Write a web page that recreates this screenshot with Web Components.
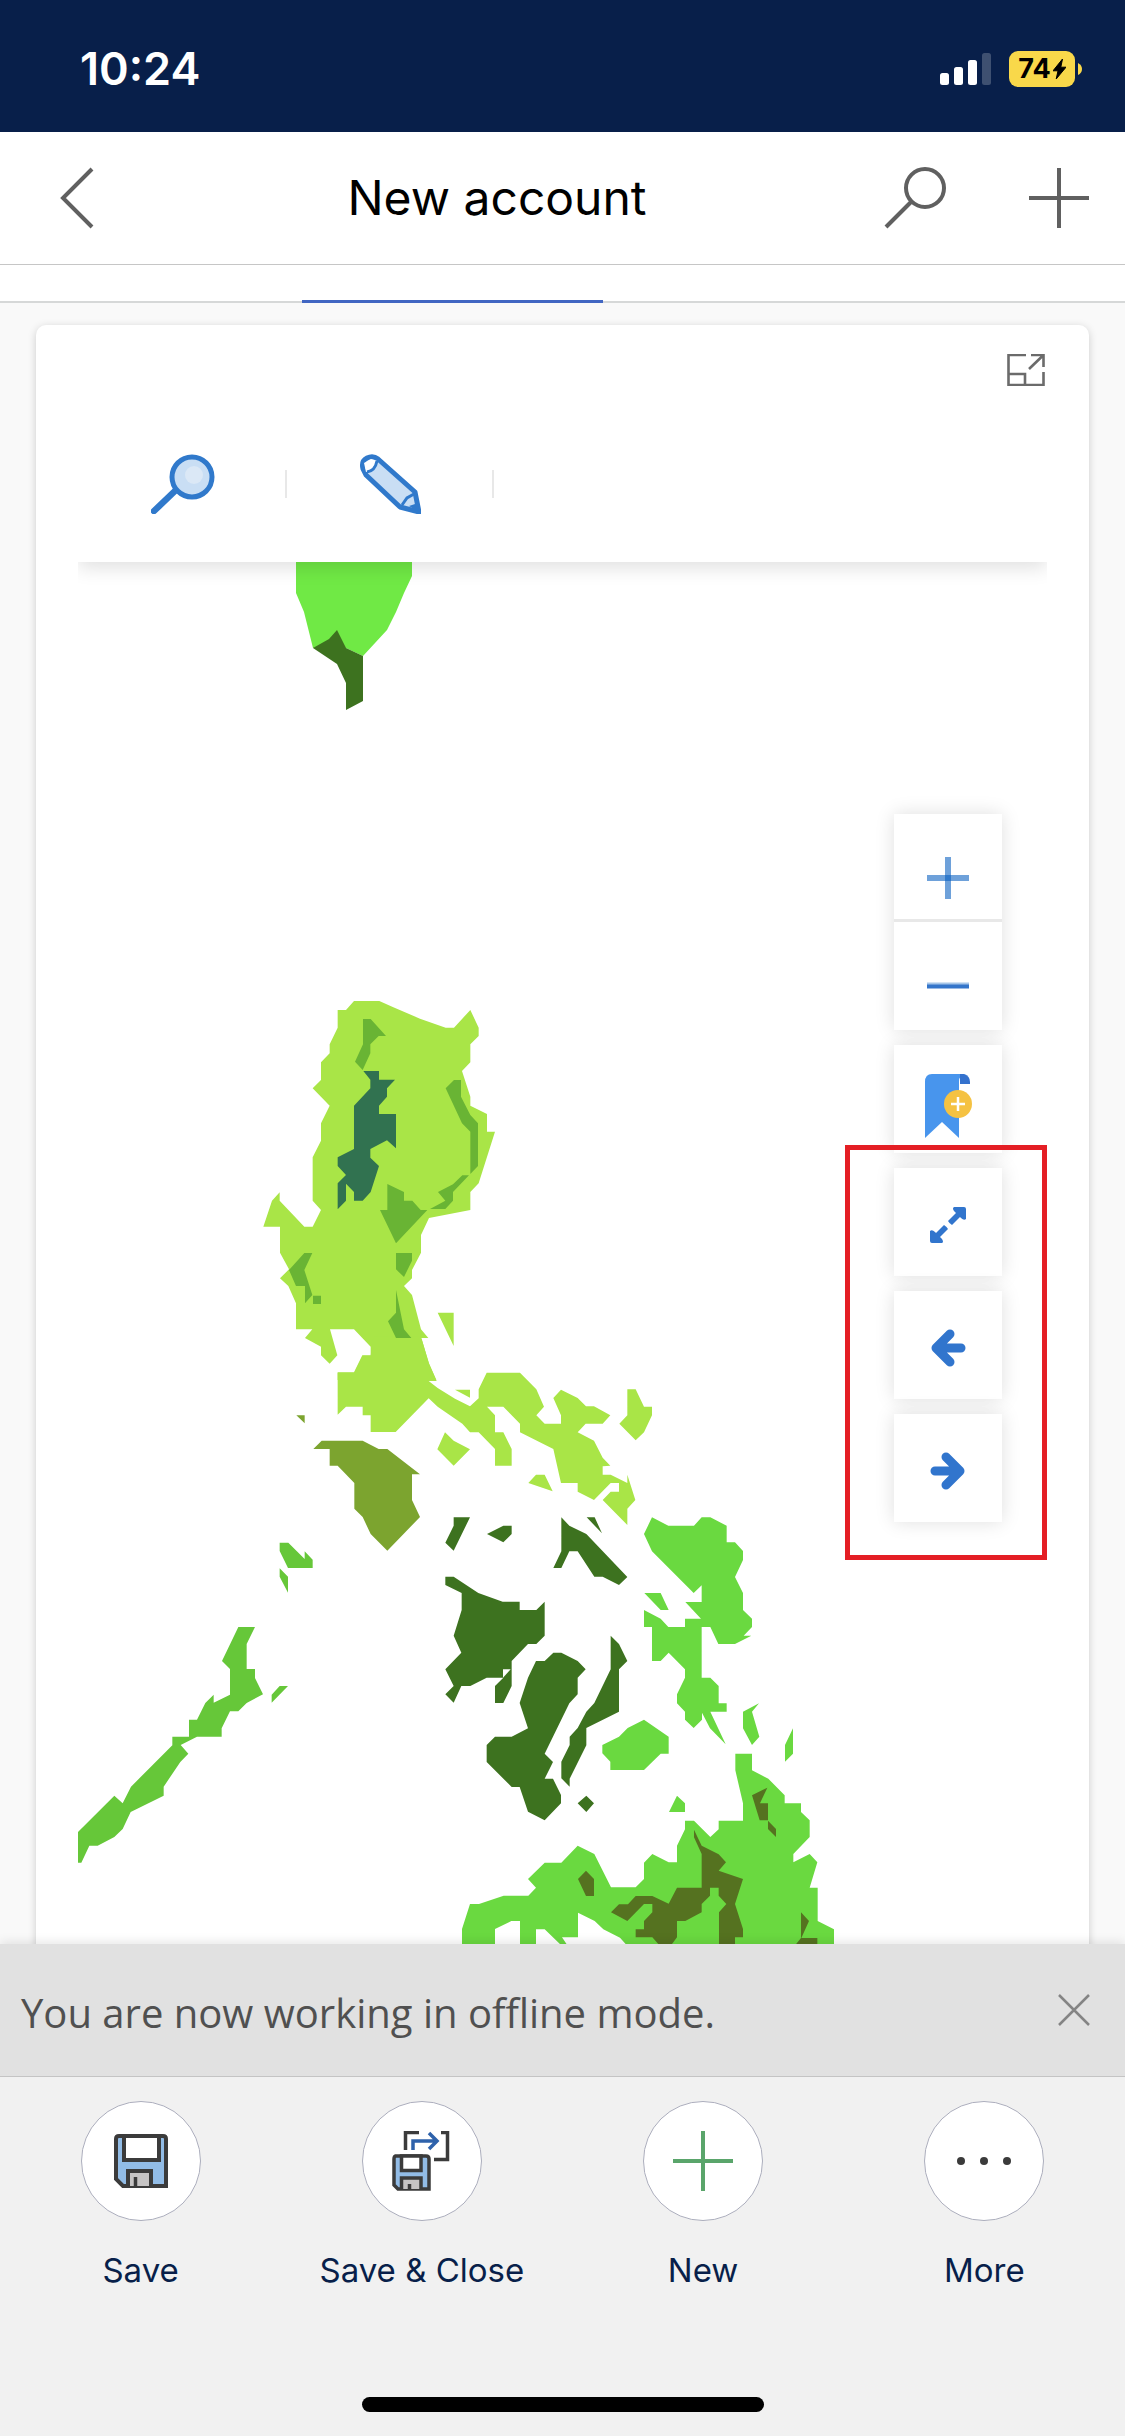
<!DOCTYPE html>
<html lang="en">
<head>
<meta charset="utf-8">
<meta name="viewport" content="width=device-width, initial-scale=1">
<title>New account</title>
<style>
  html, body { margin: 0; height: 100%; }
  body { font-family: Inter, "Liberation Sans", sans-serif; background: #f9f9f9; }
</style>
</head>
<body>
<account-app></account-app>

<script>
const define = (name, html) => {
  const template = document.createElement('template');
  template.innerHTML = html;
  customElements.define(name, class extends HTMLElement {
    constructor() {
      super();
      this.attachShadow({ mode: 'open' }).append(template.content.cloneNode(true));
    }
  });
};

const buttonReset = `
  button { margin: 0; padding: 0; border: 0; background: none; font: inherit; color: inherit; cursor: pointer;
           display: flex; align-items: center; justify-content: center; }
  svg { display: block; flex: none; }`;

define('status-bar', `
  <style>
    :host { display: flex; align-items: center; justify-content: space-between; box-sizing: border-box;
            height: 132px; padding: 6px 43px 0 80px; background: #081f4a; color: #fff; flex: none; }
    time { font-size: 45px; font-weight: 600; line-height: 52px; }
    .right { display: flex; align-items: center; gap: 18px; }
    svg { display: block; }
    .battery { display: flex; align-items: center; gap: 3px; }
    .level { display: flex; align-items: center; justify-content: center; gap: 2px; width: 66px; height: 36px;
             border-radius: 9px; background: #f9d84a; color: #000; font-size: 27px; font-weight: 700; line-height: 36px; }
  </style>
  <time>10:24</time>
  <div class="right">
    <svg width="51" height="32" viewBox="0 0 51 32" aria-hidden="true">
      <g fill="#fff"><rect y="20" width="9" height="12" rx="2.5"/><rect x="14" y="14" width="9" height="18" rx="2.5"/>
      <rect x="28" y="7" width="9" height="25" rx="2.5"/><rect x="42" width="9" height="32" rx="2.5" opacity=".22"/></g>
    </svg>
    <div class="battery">
      <div class="level"><span>74</span>
        <svg width="13" height="20" viewBox="0 0 13 20" aria-hidden="true"><path d="M9.500 0 0 11.800h5L3.200 20 13 8.200H7.800Z" fill="#000" stroke="#000" stroke-linejoin="round"/></svg>
      </div>
      <svg width="4" height="12" viewBox="0 0 4 12" aria-hidden="true"><path d="M0 0Q4 2 4 6T0 12Z" fill="#f9d84a"/></svg>
    </div>
  </div>`);

define('page-header', `
  <style>${buttonReset}
    :host { display: grid; grid-template-columns: 141px 1fr 272px; align-items: center; height: 132px;
            background: #fff; border-bottom: 1px solid #c6c6c6; flex: none; }
    h1 { margin: 0; font-size: 48px; font-weight: 400; line-height: 60px; text-align: center; color: #000; }
    .back { padding-left: 12px; height: 132px; }
    .actions { display: flex; height: 132px; }
    .actions button { width: 124px; }
    .actions button + button { width: 148px; padding-left: 16px; }
    path, circle { fill: none; stroke: #606060; stroke-width: 4; }
  </style>
  <button class="back" aria-label="Back"><svg width="34" height="62" viewBox="0 0 34 62"><path d="M32 2 3 31 32 60"/></svg></button>
  <h1><slot></slot></h1>
  <div class="actions">
    <button aria-label="Search"><svg width="62" height="62" viewBox="0 0 62 62"><circle cx="41" cy="21" r="19"/><path d="M27 35 2 60"/></svg></button>
    <button aria-label="Add"><svg width="60" height="60" viewBox="0 0 60 60"><path d="M30 0v60M0 30h60"/></svg></button>
  </div>`);

define('tab-strip', `
  <style>
    :host { display: grid; grid-template-columns: 302px 301px 1fr; height: 36px; background: #fff;
            border-bottom: 2px solid #d6d8d8; flex: none; }
    span { grid-column: 2; height: 3px; margin-bottom: -2px; align-self: end; background: #4166c2; }
  </style>
  <span></span>`);

define('map-toolbar', `
  <style>${buttonReset}
    :host { display: flex; align-items: center; height: 156px; padding-left: 2px; background: #fff;
            box-shadow: 0 6px 18px rgba(0,0,0,.12); clip-path: inset(0 0 -40px 0); position: relative; z-index: 1; }
    button { width: 207px; height: 28px; border-right: 2px solid #e8e8e8; }
  </style>
  <button aria-label="Search map"><svg width="64" height="60" viewBox="0 0 64 60">
    <path d="M26 35 3 57" stroke="#3079cb" stroke-width="6.500" stroke-linecap="round"/><circle cx="41" cy="23" r="20" fill="#c9def4" stroke="#3079cb" stroke-width="5"/>
    <circle cx="43" cy="21" r="9" fill="#dbe8f6"/></svg></button>
  <button aria-label="Draw on map"><svg width="62" height="60" viewBox="0 0 62 60">
    <path d="M4 15Q2 7 8 4T19 5L56 38 60 58 41 53 7 21Z" fill="#c9def4" stroke="#3079cb" stroke-width="5" stroke-linejoin="round"/>
    <path d="M7 18Q16 18 18 7L12 5 5 9Z" fill="#fff"/><path d="M8 18Q16 17 18 7" fill="none" stroke="#3079cb" stroke-width="3"/><path d="M43 51 48 44 55 40" fill="none" stroke="#3079cb" stroke-width="3"/>
    <path d="M50 52 59 49 60 58Z" fill="#3079cb"/></svg></button>`);

define('region-map', `
  <style>
    :host { display: block; }
    svg { display: block; width: 100%; }
  </style>
  <svg viewBox="78 562 969 1382" role="img" aria-label="Map of regions">
    <path d="M296 562H412V576L404 593 396 612 387 630 363 656 346 648H313L304 612 296 593Z" fill="#70e945"/>
    <path d="M313 648 329 639 337 630 346 648 363 656V701L346 710V683L337 664Z" fill="#3d721f"/>
    <g fill="#a9e547">
      <path transform="translate(250 980) scale(.333333)" d="M263 90 288 90 312 63 388 63 430 82 510 116 587 143 612 143 661 90 686 143 686 168 661 193 661 247 636 273 661 350 661 377 711 402 711 455 735 455 686 610 661 636 661 690 537 714 513 765 513 818 486 870 486 895 462 918 486 945 513 1048 535 1074 514 1074 537 1150 559 1200 263 1200 263 1177 312 1177 337 1126 362 1126 362 1100 312 1048 240 1048 262 1126 239 1151 213 1126 213 1100 165 1074 187 1048 138 1048 138 970 115 918 90 895 117 868 90 818 90 740 40 740 66 662 89 637 89 662 163 740 188 740 213 690 188 662 188 532 213 482 213 430 239 377 188 325 213 300 213 247 239 220 239 193 263 143Z"/>
      <path transform="translate(240 1300) scale(.333333)" d="M293 218 343 218 368 167 392 167 400 110 540 110 545 117 567 192 590 243 566 243 593 264 645 296 690 319 716 295 716 268 740 218 840 218 889 268 912 320 889 346 914 371 963 371 963 346 940 294 963 269 1013 294 1038 319 1062 319 1111 346 1088 371 1037 371 1013 397 1062 422 1088 473 1111 497 1088 499 1088 524 1112 524 1162 549 1162 524 1186 600 1162 626 1162 675 1088 600 1112 575 1137 575 1137 549 1112 549 1062 600 1013 575 1013 549 963 549 940 447 840 397 840 371 790 320 741 320 765 346 765 397 790 397 815 447 815 497 765 497 765 447 716 397 690 397 667 371 593 320 566 295 467 396 392 396 392 346 368 346 368 320 318 320 293 344ZM645 269H690V293ZM593 38H641V138ZM615 397 641 422 690 448 641 497 592 448ZM865 549 888 524 914 524 938 574ZM1162 268 1187 268 1212 320 1236 320 1236 346 1212 397 1187 421 1138 371 1162 346Z"/>
    </g>
    <g transform="translate(250 980) scale(.333333)">
      <path fill="#69b434" d="M339 117H362L408 168H386L361 193V220L338 270 315 245 339 193ZM612 300H633V350L661 405 684 430V558L661 582V455L636 430 587 325ZM637 586H657L609 636V662L586 687H540L586 662 564 636 609 613ZM412 612 462 636V662H487L512 690H532L438 790 390 690H412ZM438 819H486V842L462 891 438 868ZM438 930 462 1048 484 1074H438L414 1024 438 998ZM163 819H187L163 870 187 945 165 970V918H138L117 870ZM189 947H213V972H189Z"/>
      <path fill="#317250" d="M340 273H387V299H435L411 325V350L387 377V402H438V505L411 481 361 507V533L387 558 362 636 338 662H312V636L288 611V662L263 688V610L288 585 263 558V532L312 507V377L361 325V299Z"/>
    </g>
    <path transform="translate(240 1300) scale(.333333)" fill="#7ca42f" d="M220 447 245 422 368 422 416 447 442 447 540 523 516 523 516 600 540 651 442 752 392 702 368 651 343 626 343 549 293 497 269 497 269 447ZM169 346H194V370Z"/>
    <path transform="translate(60 1480) scale(.333333)" fill="#66c739" d="M659 188H685L734 237V214L758 239V264H684L659 213ZM659 265 684 290V338L659 290ZM535 441H585L560 492V567H585V594L609 643 560 669 535 694H510L485 745V770H411L362 795 385 821 361 846 311 920V947L212 996 188 1047 163 1071 113 1097H88L64 1148H54V1056L163 947 188 970 213 920 337 796V770H387V719H411L436 669 461 644V668L510 644V567L486 543ZM635 644 659 618H684L635 668Z"/>
    <g transform="translate(420 1490) scale(.333333)">
      <path fill="#3d721f" d="M101 82H150L101 182 76 158 101 107ZM201 132 250 107H275V132L250 157ZM424 82 448 107 499 132 622 261 597 285 548 260H523L473 184H448L424 234H400L424 184ZM500 82H524L546 130ZM76 260H101L175 309 248 335H299V360H349L374 335V437L349 462H324L275 513V588L250 639H225V588L250 563H200L151 588H124L101 638 76 613 101 588 76 538 124 488 101 437 125 360V309L76 285ZM400 488H424L473 513 497 538 473 563V613L448 640 374 791 399 816 374 866H399L423 915V940L374 991 324 965 299 891H275L200 816V765L225 740H275L324 715 299 639 324 563 348 513H374ZM572 437 597 462 622 513 597 538V665L499 714V766L449 866V890L424 865V815L449 765V740L473 714 499 665 523 639 572 538ZM499 917 522 940 499 966 473 940Z"/>
      <path fill="#fff" d="M249 538H272L249 563Z"/>
      <path fill="#6ad940" d="M696 82 745 107H822L845 82H871L920 107V157H945L969 183V210L945 261 969 309V360L996 386V411L971 437H994L945 462H895L871 411H845V563H871L896 588V640H920V665H871L917 763 870 715 846 668V689L821 714 795 689V665L771 640V613L795 563V538L746 488 722 513H696V411H672V360L722 386 745 411H795V386H843L796 336H845V286L821 309 696 184 672 132ZM673 309H722L746 360H722ZM672 689 746 740V791H722L672 840H571V815L547 790V765L597 740 623 714ZM771 917 795 940V966H747ZM1017 640 996 665 1018 740 996 765 969 715V665ZM1119 715V791L1095 815V765Z"/>
    </g>
    <g transform="translate(440 1740) scale(.333333)">
      <path fill="#6ad940" d="M886 41H936V91L985 116 1034 166V190H1083V216L1109 241V291L1060 342V367L1109 342 1132 367 1109 443H1133V543L1182 568V620H564L540 593 490 568 464 543 414 518V592H366L385 620H368L314 568H288V620H240V543H214L165 567V620H66V567L90 492H117L191 467H265L288 443 264 417 314 368H364L413 317 463 342 513 442H587L612 417V368L637 342 686 367H711V317L735 268V242H762L811 291 836 268V242H909V190L886 91Z"/>
      <path fill="#557220" d="M936 166 982 143 960 190H984V241H959ZM984 242 1008 267V291L984 267ZM762 269 785 317 836 343 858 367 836 392 909 417 885 492 909 567V592H885V620H837V517L859 492 836 467V443H810V467L785 492V517L736 543H711V592L690 620H662L637 592H587V568H612V543L637 517V492H612L562 543 513 517 537 493H564L587 468H637L686 491 711 443H785V342L762 292ZM438 392 462 417V468H438L414 417ZM1083 517 1107 543 1084 594H1132V620H1062L1083 594Z"/>
    </g>
  </svg>`);

define('map-button', `
  <style>${buttonReset}
    :host { display: block; box-shadow: 0 0 18px rgba(0,0,0,.13); }
    button { box-sizing: border-box; width: 108px; height: 108px; padding-top: 6px; background: #fff; }
    :host([kind=zoom]) { box-shadow: none; }
    :host([kind=zoom]) button { padding-top: 20px; }
    :host([kind=mark]) button { padding-top: 14px; }
  </style>
  <button><slot></slot></button>`);

define('map-controls', `
  <style>
    :host { display: flex; flex-direction: column; gap: 15px; }
    .zoom { box-shadow: 0 0 18px rgba(0,0,0,.13); }
    .zoom map-button + map-button { border-top: 3px solid #e8e8e8; margin-top: -3px; position: relative; }
    svg { display: block; }
  </style>
  <div class="zoom">
    <map-button kind="zoom"><svg width="44" height="44" viewBox="0 0 44 44" role="img" aria-label="Zoom in"><path d="M22 1v42M1 22h42" stroke="#3079cb" stroke-opacity=".7" stroke-width="6"/><path d="M19 19h6v6h-6z" fill="#3079cb"/></svg></map-button>
    <map-button kind="zoom"><svg width="44" height="44" viewBox="0 0 44 44" role="img" aria-label="Zoom out"><path d="M1 20h42" stroke="#a5c5e8" stroke-width="3"/><path d="M1 22.500h42" stroke="#3475ca" stroke-width="4"/></svg></map-button>
  </div>
  <map-button kind="mark"><svg width="48" height="64" viewBox="0 0 48 64" role="img" aria-label="Bookmark">
    <path d="M8 0H43Q35 0 35 8V64L18 48 1 64V8Q1 0 8 0Z" fill="#4895ed"/><path d="M36 0H40Q46 2 46 8V10H36Z" fill="#3472cd"/>
    <circle cx="34" cy="30" r="14" fill="#f5c242"/><path d="M34 23v14M27 30h14" stroke="#fff" stroke-width="2.500"/></svg></map-button>
  <map-button><svg width="36" height="36" viewBox="0 0 36 36" role="img" aria-label="Full extent"><g fill="#3175cd">
    <path d="M24 0H34Q36 0 36 2V12Q34 14 31 11L30 10 22 18Q19 16 18 14L26 6 24 4Q22 1 24 0Z"/><path transform="rotate(180 18 18)" d="M24 0H34Q36 0 36 2V12Q34 14 31 11L30 10 22 18Q19 16 18 14L26 6 24 4Q22 1 24 0Z"/></g></svg></map-button>
  <map-button><svg width="36" height="38" viewBox="0 0 36 38" role="img" aria-label="Previous extent"><path d="M20 5 6 19 20 33M8 19H31" fill="none" stroke="#3175cd" stroke-width="9" stroke-linecap="round" stroke-linejoin="round"/></svg></map-button>
  <map-button><svg width="36" height="38" viewBox="0 0 36 38" role="img" aria-label="Next extent"><path d="M16 5 30 19 16 33M28 19H5" fill="none" stroke="#3175cd" stroke-width="9" stroke-linecap="round" stroke-linejoin="round"/></svg></map-button>`);

define('map-card', `
  <style>${buttonReset}
    :host { display: block; flex: 1; min-height: 0; overflow: hidden; padding: 22px 36px 0; background: #f9f9f9; }
    section { box-sizing: border-box; padding: 29px 42px 36px; min-height: 100%; background: #fff; border-radius: 10px; box-shadow: 0 2px 8px rgba(0,0,0,.18); }
    .top { display: flex; justify-content: flex-end; height: 52px; align-items: start; padding-right: 2px; }
    .stage { position: relative; }
    map-controls { position: absolute; top: 252px; right: 45px; }
    .highlight { position: absolute; top: 583px; right: 0; width: 202px; height: 415px; box-sizing: border-box; border: 5px solid #e41e24; pointer-events: none; }
  </style>
  <section>
    <div class="top"><button aria-label="Expand map"><svg width="38" height="32" viewBox="0 0 38 32">
      <path d="M19 1H1.500V31H36.500V18M1.500 20H18V31M24 1H36.500V13M36 1.500 22 15" fill="none" stroke="#6b6b6b" stroke-width="2.600"/></svg></button></div>
    <map-toolbar></map-toolbar>
    <div class="stage">
      <region-map></region-map>
      <map-controls></map-controls>
      <div class="highlight"></div>
    </div>
  </section>`);

define('offline-notice', `
  <style>${buttonReset}
    :host { display: flex; align-items: center; justify-content: space-between; height: 132px; padding: 0 35px 0 21px;
            background: #e1e1e1; border-bottom: 1px solid #c4c4c4; color: #505050; flex: none; position: relative; z-index: 2;
            box-shadow: 0 -2px 10px rgba(0,0,0,.1); clip-path: inset(-20px 0 0 0); }
    p { margin: 0; padding-top: 6px; font: 40px/54px "Open Sans", "Noto Sans", sans-serif; }
  </style>
  <p><slot></slot></p>
  <button aria-label="Dismiss"><svg width="32" height="32" viewBox="0 0 32 32"><path d="M1 1 31 31M31 1 1 31" stroke="#848484" stroke-width="2.500"/></svg></button>`);

define('command-button', `
  <style>${buttonReset}
    :host { display: flex; flex: 1; justify-content: center; }
    button { flex-direction: column; gap: 27px; color: #081f4a; font-size: 33px; line-height: 44px; }
    .disc { display: flex; align-items: center; justify-content: center; box-sizing: border-box; width: 120px; height: 120px;
            border-radius: 50%; background: #fff; border: 1px solid #acaebd; }
  </style>
  <button><span class="disc"><slot name="icon"></slot></span><span><slot></slot></span></button>`);

define('command-bar', `
  <style>
    :host { display: flex; flex-direction: column; justify-content: space-between; align-items: center; box-sizing: border-box; height: 359px;
            padding: 24px 0; background: #f1f1f1; flex: none; }
    nav { display: flex; align-self: stretch; }
    svg { display: block; }
    .home { width: 402px; height: 15px; border-radius: 8px; background: #000; }
  </style>
  <nav>
    <command-button><svg slot="icon" width="54" height="54" viewBox="0 0 54 54">
      <path d="M5 2H49Q52 2 52 5V52H9L2 45V5Q2 2 5 2Z" fill="#92bce6" stroke="#3b3b3b" stroke-width="4"/>
      <path d="M10 2H45V26H10Z" fill="#fff" stroke="#3b3b3b" stroke-width="4"/><path d="M14 52V37H37V52" fill="#c6c4c4" stroke="#3b3b3b" stroke-width="4"/><path d="M21.500 43V52" stroke="#3b3b3b" stroke-width="3.500"/></svg>Save</command-button>
    <command-button><svg slot="icon" width="60" height="60" viewBox="0 0 60 60">
      <path d="M3 25H34Q37 25 37 28V58H6L2 54V28Q2 25 4 25Z" fill="#92bce6" stroke="#3b3b3b" stroke-width="3.500"/>
      <path d="M9.500 25H29V39.500H9.500Z" fill="#fff" stroke="#3b3b3b" stroke-width="3.500"/><path d="M9.500 58V47H29V58" fill="#c6c4c4" stroke="#3b3b3b" stroke-width="3.500"/><path d="M17.500 53V58" stroke="#3b3b3b" stroke-width="3.500"/>
      <path d="M13.500 19V1.500H27M49 1.500H55.500V28.500H42" fill="none" stroke="#3b3b3b" stroke-width="3.500"/>
      <path d="M21 19V10H44M37 2 45 10 37 18" fill="none" stroke="#2e62ab" stroke-width="3.500"/></svg>Save &amp; Close</command-button>
    <command-button><svg slot="icon" width="60" height="60" viewBox="0 0 60 60"><path d="M30 0v60M0 30h60" stroke="#5aa56b" stroke-width="4"/></svg>New</command-button>
    <command-button><svg slot="icon" width="54" height="8" viewBox="0 0 54 8" fill="#3b3b3b"><circle cx="4" cy="4" r="4"/><circle cx="27" cy="4" r="4"/><circle cx="50" cy="4" r="4"/></svg>More</command-button>
  </nav>
  <div class="home"></div>`);

define('account-app', `
  <style>:host { display: flex; flex-direction: column; height: 100vh; overflow: hidden; }</style>
  <status-bar></status-bar>
  <page-header>New account</page-header>
  <tab-strip></tab-strip>
  <map-card></map-card>
  <offline-notice>You are now working in offline mode.</offline-notice>
  <command-bar></command-bar>`);
</script>
</body>
</html>
